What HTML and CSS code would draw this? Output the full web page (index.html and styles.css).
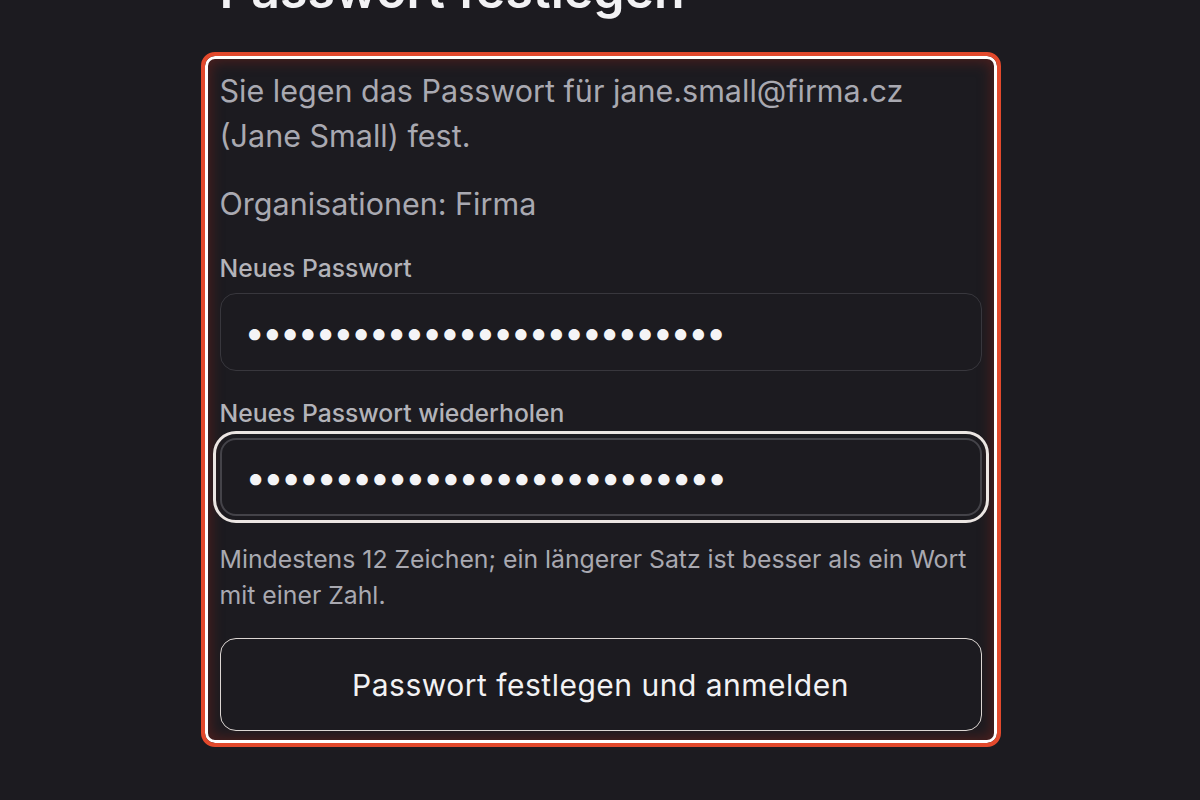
FILE: index.html
```html
<!DOCTYPE html>
<html lang="de">
<head>
    <meta charset="utf-8">
    <title>Passwort festlegen</title>
    <link rel="stylesheet" href="styles.css">
</head>
<body>
<main class="page">
    <h1 class="page-title">Passwort festlegen</h1>
    <section class="setup-card">
        <p class="intro">Sie legen das Passwort für jane.small@firma.cz (Jane Small) fest.</p>
        <p class="intro">Organisationen: Firma</p>
        <form class="password-form" onsubmit="return false;">
            <label for="new-password">Neues Passwort</label>
            <input type="password" id="new-password" name="new-password" value="aaaaaaaaaaaaaaaaaaaaaaaaaaa">
            <label for="repeat-password">Neues Passwort wiederholen</label>
            <input type="password" id="repeat-password" name="repeat-password" class="is-focused" value="aaaaaaaaaaaaaaaaaaaaaaaaaaa">
            <p class="hint">Mindestens 12 Zeichen; ein längerer Satz ist besser als ein Wort mit einer Zahl.</p>
            <button type="submit">Passwort festlegen und anmelden</button>
        </form>
    </section>
</main>
</body>
</html>
```

FILE: styles.css
```css
html, body {
    margin: 0;
    height: 100%;
    overflow: hidden;
}

body {
    font-family: Inter, "Noto Sans", sans-serif;
    background-color: #1c1b20;
    color: #a9a9b1;
}

.page {
    width: 800px;
    margin: 0 auto;
    padding-left: 1px;
}

.page-title {
    margin: -40px 0 32px 0;
    padding-left: 19px;
    font-size: 50px;
    line-height: 60px;
    font-weight: 600;
    color: #f2f2f4;
}

.setup-card {
    border: 4px solid #e2492c;
    border-radius: 14px;
    padding: 12px 15px 12px 15px;
    box-shadow: inset 0 0 0 3px #ffffff, inset 0 0 14px 5px rgba(120, 35, 28, 0.55);
}

.intro {
    margin: 0 0 23px 0;
    font-size: 30.5px;
    line-height: 45px;
}

.password-form {
    display: flex;
    flex-direction: column;
    margin-top: 25px;
}

.password-form label {
    font-size: 24.7px;
    line-height: 34px;
    font-weight: 500;
    color: #b3b3b9;
    margin-bottom: 8px;
}

.password-form input[type="password"] {
    height: 78px;
    box-sizing: border-box;
    margin: 0 0 25px 0;
    padding: 0 24px;
    background-color: #1c1b20;
    border: 1.5px solid #38373d;
    border-radius: 16px;
    color: #f4f4f6;
    font-family: Inter, "Noto Sans", sans-serif;
    font-size: 36px;
    letter-spacing: -2.5px;
    outline: none;
}

.password-form input.is-focused {
    border-color: #444349;
    border-width: 2px;
    outline: 3px solid #ebe5e2;
    outline-offset: 4px;
}

.hint {
    margin: 0 0 25px 0;
    font-size: 24.8px;
    line-height: 36px;
}

.password-form button {
    height: 93px;
    background-color: #1c1b20;
    border: 1.5px solid #dcd6d3;
    border-radius: 16px;
    color: #f2f2f4;
    font-family: Inter, "Noto Sans", sans-serif;
    font-size: 30px;
    letter-spacing: 0.5px;
    font-weight: 400;
    cursor: pointer;
}
```
